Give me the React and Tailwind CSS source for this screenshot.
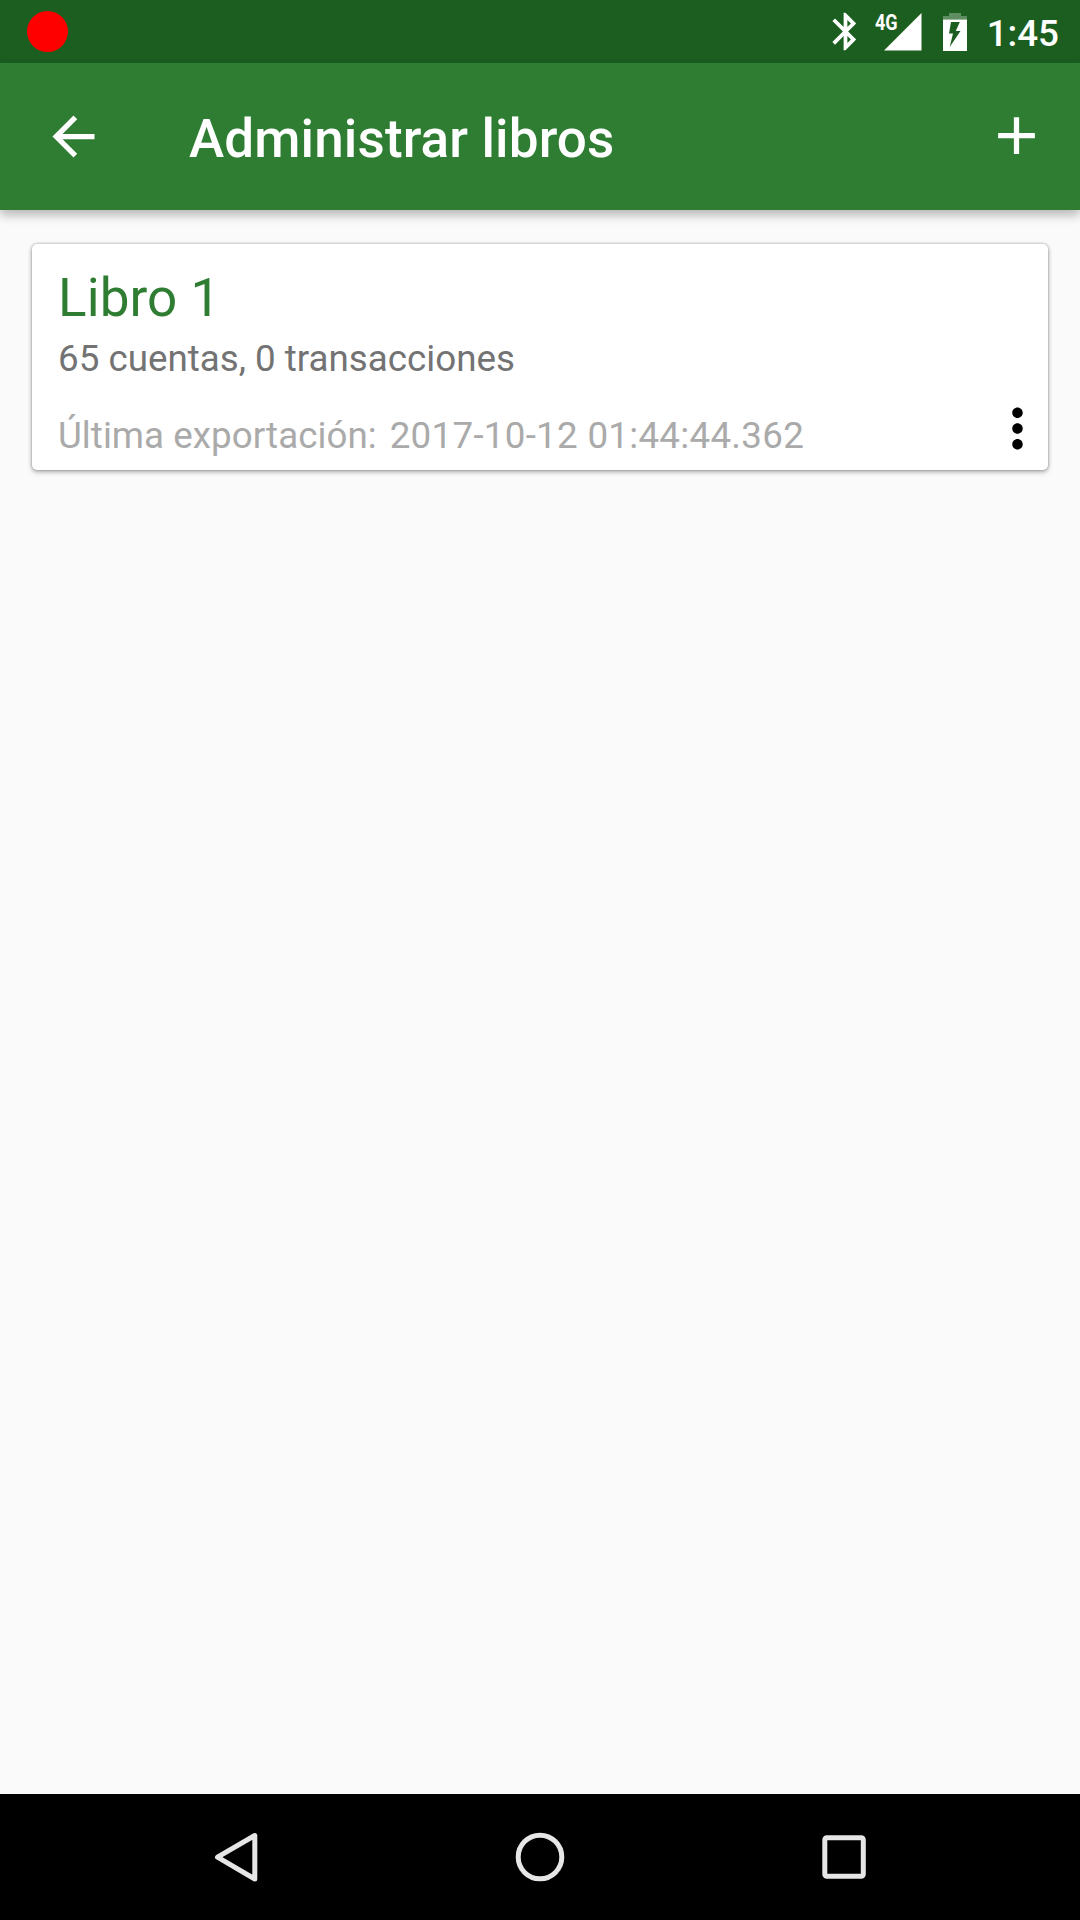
function StatusBar() {
  return (
    <header className="flex h-[63px] items-center bg-[#1b5e20] pl-[27px] pr-[21px]">
      <span className="size-[41px] rounded-full bg-[#ff0000]" />
      <div className="ml-auto flex h-full items-center">
        <svg className="h-[45px] w-[45px] shrink-0" viewBox="0 0 24 24" fill="#fff">
          <path d="M17.71 7.71L12 2h-1v7.59L6.41 5 5 6.41 10.59 12 5 17.59 6.41 19 11 14.41V22h1l5.71-5.71-4.3-4.29 4.3-4.29zM13 5.83l1.88 1.88L13 9.59V5.83zm1.88 10.46L13 18.17v-3.76l1.88 1.88z" />
        </svg>
        <div className="relative ml-[7px] h-[63px] w-[47px]">
          <span className="absolute left-0 top-[12px] origin-left scale-x-[0.82] text-[22px] font-bold leading-[22px] text-white">4G</span>
          <svg className="absolute left-[8px] top-[12px] h-[39px] w-[39px]" viewBox="0 0 39 39" fill="#fff">
            <path d="M38.5 1v37.5H1z" />
          </svg>
        </div>
        <svg className="ml-[21px] h-[38px] w-[24px]" viewBox="0 0 24 38">
          <path d="M6 0h12v3h6v3.5H0V3h6z" fill="#fff" fillOpacity="0.3" />
          <path d="M0 6.5h24V38H0zM8 9L6 20.5h4L6.7 34 17.5 18H12.8L16.8 9z" fill="#fff" fillRule="evenodd" />
        </svg>
        <span className="ml-[20px] pt-[4px] text-[36.75px] font-medium leading-[42px] text-white">1:45</span>
      </div>
    </header>
  );
}

function Toolbar() {
  return (
    <div className="relative z-10 flex h-[147px] items-center bg-[#2e7d32] pl-[42px] pr-[32px] shadow-[0_5px_10px_rgba(0,0,0,0.28)]">
      <svg className="size-[63px]" viewBox="0 0 24 24" fill="#fff">
        <path d="M20 11H7.83l5.59-5.59L12 4l-8 8 8 8 1.41-1.41L7.83 13H20v-2z" />
      </svg>
      <h1 className="ml-[84px] pt-[5px] text-[53px] font-medium leading-[62px] tracking-[0.13px] text-white">Administrar libros</h1>
      <svg className="mb-[2px] ml-auto size-[63px]" viewBox="0 0 24 24" fill="#fff">
        <path d="M19 13h-6v6h-2v-6H5v-2h6V5h2v6h6v2z" />
      </svg>
    </div>
  );
}

function BookCard() {
  return (
    <article className="flex h-[226px] rounded-[5px] bg-white pl-[26px] pt-[23px] shadow-[0_2px_5px_rgba(0,0,0,0.3),0_0_3px_rgba(0,0,0,0.3)]">
      <div>
        <h2 className="text-[53px] leading-[62px] tracking-[0.1px] text-[#2e7d32]">Libro 1</h2>
        <p className="mt-[8px] text-[36.75px] leading-[44px] text-[#737373]">65 cuentas, 0 transacciones</p>
        <p className="mt-[33px] flex gap-[13px] text-[36.75px] leading-[44px] text-[#aaaaaa]">
          <span className="tracking-[0.03px]">Última exportación:</span>
          <span className="tracking-[0.28px]">2017-10-12 01:44:44.362</span>
        </p>
      </div>
      <svg className="-mr-[0.5px] mb-[10.5px] ml-auto size-[63px] self-end" viewBox="0 0 24 24" fill="#000">
        <path d="M12 8c1.1 0 2-.9 2-2s-.9-2-2-2-2 .9-2 2 .9 2 2 2zm0 2c-1.1 0-2 .9-2 2s.9 2 2 2 2-.9 2-2-.9-2-2-2zm0 6c-1.1 0-2 .9-2 2s.9 2 2 2 2-.9 2-2-.9-2-2-2z" />
      </svg>
    </article>
  );
}

function NavigationBar() {
  return (
    <nav className="flex h-[126px] items-center justify-between bg-black pl-[206px] pr-[206px]">
      <svg className="size-[60px]" viewBox="0 0 60 60" fill="none" stroke="#e6e6e6" strokeWidth="5" strokeLinejoin="round">
        <path d="M48.8 8.5V52L11.5 30.2z" />
      </svg>
      <svg className="size-[60px]" viewBox="0 0 60 60" fill="none" stroke="#e6e6e6" strokeWidth="5">
        <circle cx="30" cy="30" r="21.8" />
      </svg>
      <svg className="size-[60px]" viewBox="0 0 60 60" fill="none" stroke="#e6e6e6" strokeWidth="5">
        <rect x="10.8" y="10.8" width="38.5" height="38.5" rx="2" />
      </svg>
    </nav>
  );
}

export default function App() {
  return (
    <div className="flex h-[1920px] w-[1080px] flex-col overflow-hidden bg-[#fafafa] font-['Roboto',sans-serif]">
      <StatusBar />
      <Toolbar />
      <main className="flex-1 px-[32px] pt-[34px]">
        <BookCard />
      </main>
      <NavigationBar />
    </div>
  );
}
